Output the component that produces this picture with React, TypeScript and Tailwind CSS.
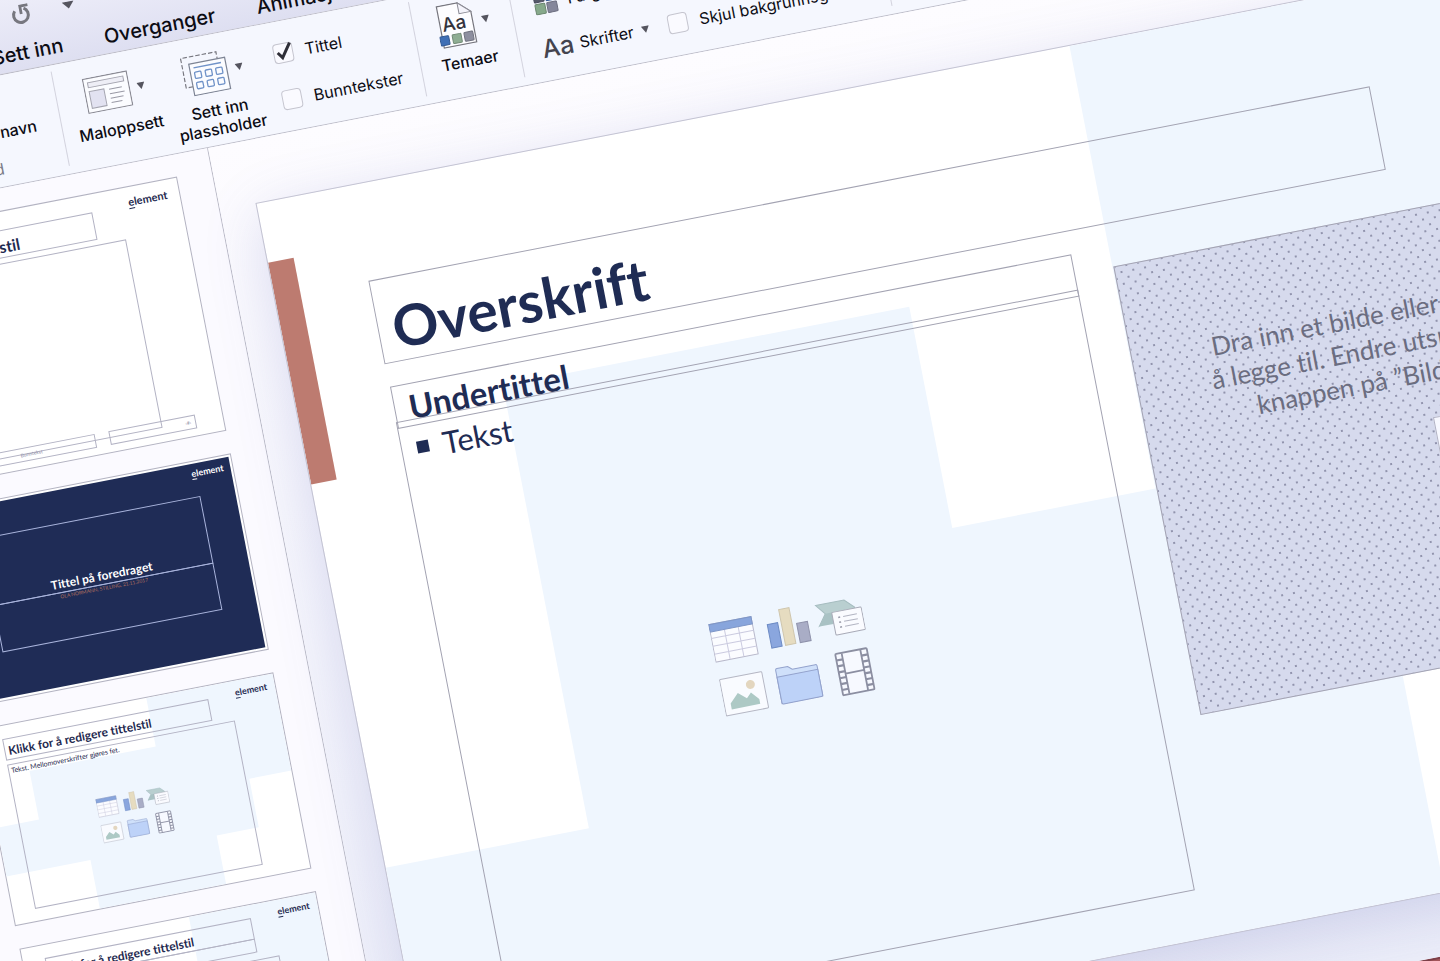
import type { ReactNode } from "react";
import clsx from "clsx";

const UI_FONT = "font-['Inter',sans-serif]";
const SLIDE_FONT = "font-['Lato','Open_Sans',sans-serif] [font-variant-ligatures:none]";

function Caret({ className }: { className?: string }) {
  return (
    <svg viewBox="0 0 8 8" preserveAspectRatio="none" className={clsx("shrink-0", className ?? "size-2")} aria-hidden="true">
      <path d="M0 0.5H8L4 7.5Z" fill="#55555f" />
    </svg>
  );
}

function RedoIcon() {
  return (
    <svg viewBox="0 0 20 20" className="size-5" fill="none" aria-hidden="true">
      <path d="M4.2 5.8A7.4 7.4 0 1 0 13.5 4.4" stroke="#77777f" strokeWidth="3" />
      <path d="M10.2 9.8V1.800H18" stroke="#77777f" strokeWidth="2.800" />
    </svg>
  );
}

function LayoutIcon() {
  return (
    <svg viewBox="0 0 46 36" className="h-9 w-[46px]" fill="none" aria-hidden="true">
      <rect x="0.7" y="0.7" width="44.6" height="34.6" fill="#fbfcff" stroke="#8b8b95" strokeWidth="1.2" />
      <rect x="5" y="5" width="36" height="5" fill="#eeeef6" stroke="#a5a5b0" />
      <rect x="5" y="14" width="15" height="17" fill="#e2e2f1" stroke="#a5a5b0" />
      <path d="M25 15.5H38M25 20H40M25 24.5H38M25 29H36" stroke="#9a9aa6" />
    </svg>
  );
}

function PlaceholderIcon() {
  return (
    <svg viewBox="0 0 46 41" className="h-[41px] w-[46px]" fill="none" aria-hidden="true">
      <path d="M8 31H1V1H37V8" stroke="#77777f" strokeWidth="1.2" strokeDasharray="4.5 2" />
      <rect x="8" y="8" width="36.5" height="32" fill="#fbfcff" stroke="#7d8494" strokeWidth="1.2" />
      <path d="M12 12.5H40" stroke="#6f92c8" strokeWidth="1.4" />
      <g stroke="#6f92c8" strokeWidth="1.3">
        <rect x="12" y="17" width="6.5" height="6.5" rx="1" />
        <rect x="22.8" y="17" width="6.5" height="6.5" rx="1" />
        <rect x="33.5" y="17" width="6.5" height="6.5" rx="1" />
        <rect x="12" y="27.5" width="6.5" height="6.5" rx="1" />
        <rect x="22.8" y="27.5" width="6.5" height="6.5" rx="1" />
        <rect x="33.5" y="27.5" width="6.5" height="6.5" rx="1" />
      </g>
    </svg>
  );
}

function ThemeIcon() {
  return (
    <svg viewBox="0 0 38 44" className="h-11 w-[38px]" fill="none" aria-hidden="true">
      <path d="M3 1H24L36 12V43H3Z" fill="#fdfdff" stroke="#77777f" strokeWidth="1.2" />
      <path d="M24 1V12H36Z" fill="#f4f4fb" stroke="#8b8b95" />
      <text x="5" y="27" fill="#33333d" fontFamily="Inter, sans-serif" fontSize="19">
        Aa
      </text>
      <rect x="0.5" y="31.5" width="9" height="9" rx="1" fill="#3f6fb5" stroke="#345a94" />
      <rect x="13" y="31.5" width="9" height="9" rx="1" fill="#8fae93" stroke="#728a76" />
      <rect x="25" y="31.5" width="9" height="9" rx="1" fill="#8d8f9f" stroke="#70727f" />
    </svg>
  );
}

function ColorsIcon() {
  return (
    <svg viewBox="0 0 24 24" className="size-6" aria-hidden="true">
      <rect x="1" y="1" width="10" height="10" rx="1" fill="#55596a" stroke="#44485a" />
      <rect x="13" y="1" width="10" height="10" rx="1" fill="#3f6fb5" stroke="#345a94" />
      <rect x="1" y="13" width="10" height="10" rx="1" fill="#86a98b" stroke="#6c8770" />
      <rect x="13" y="13" width="10" height="10" rx="1" fill="#85879b" stroke="#6d6f80" />
    </svg>
  );
}

function ContentIcons({ className }: { className: string }) {
  return (
    <svg viewBox="0 0 154 99" className={className} fill="none" aria-hidden="true">
      <g>
        <rect x="0.5" y="2.5" width="43" height="38" fill="#fbfcff" stroke="#b9b9cb" />
        <path d="M0.5 16.5H43.5M0.5 24.5H43.5M0.5 32.5H43.5M15 10V40M29 10V40" stroke="#cbcbe0" />
        <rect x="0.5" y="2.5" width="43" height="7.5" fill="#88a5dc" stroke="#7f97c8" />
      </g>
      <g strokeWidth="1">
        <rect x="58" y="13.5" width="10.500" height="24" fill="#8aa6de" stroke="#6d8bc4" />
        <rect x="72" y="1" width="10.500" height="36.500" fill="#e6dcc0" stroke="#cfc6ae" />
        <rect x="87" y="18" width="11" height="19.500" fill="#a9adc6" stroke="#8f92ab" />
      </g>
      <g>
        <path d="M109 4H138L147 13V21H118L109 25L117 14Z" fill="#b9cfd0" stroke="#a5bcbf" />
        <path d="M109 25.500L117 14H126V25.500Z" fill="#a9c2c4" />
        <rect x="123.500" y="14" width="30" height="23" rx="1" fill="#fafbff" stroke="#a9abb8" />
        <path d="M129 20H131M129 25H131M129 30H131" stroke="#9a9cab" strokeWidth="1.500" />
        <path d="M134 20H148M134 25H148M134 30H148" stroke="#b3b5c3" />
      </g>
      <g>
        <rect x="0.500" y="58.500" width="43" height="37" rx="1" fill="#f9fbff" stroke="#b5b7c4" />
        <circle cx="30" cy="69" r="4.500" fill="#e3d6bf" />
        <path d="M7 90V84L16 75L24 82L29 77L36 85V90Z" fill="#adc9c5" />
      </g>
      <g stroke="#93a2cc">
        <path d="M57.500 94V60Q57.500 58.500 59 58.500H70L74 62H97.500Q99 62 99 63.500V94Z" fill="#cfe0fa" />
        <path d="M57.500 67H99V93Q99 94.500 97.500 94.500H59Q57.500 94.500 57.500 93Z" fill="#bdd2f8" />
      </g>
      <g stroke="#8c8fa2">
        <rect x="119" y="55.500" width="32" height="42" rx="1" fill="#f7f9ff" strokeWidth="1.800" />
        <path d="M125.500 56V97M144.500 56V97M125.500 76.500H144.500" strokeWidth="1.800" />
        <path
          d="M119 62H125.500M119 68H125.500M119 74H125.500M119 80H125.500M119 86H125.500M119 92H125.500M144.500 62H151M144.500 68H151M144.500 74H151M144.500 80H151M144.500 86H151M144.500 92H151"
          strokeWidth="2.200"
        />
      </g>
    </svg>
  );
}

function RibbonButton({ icon, className, children }: { icon: ReactNode; className?: string; children: ReactNode }) {
  return (
    <button
      type="button"
      className={clsx("flex flex-col items-center text-center text-[16px] font-medium leading-[19px]", className)}
    >
      <span className="flex h-11 items-center gap-[7px]">
        {icon}
        <Caret />
      </span>
      <span className="mt-[7px] whitespace-nowrap">{children}</span>
    </button>
  );
}

function RibbonCheck({ label, checked }: { label: string; checked?: boolean }) {
  return (
    <label className="flex h-5 items-center gap-3 whitespace-nowrap text-[16px] leading-5">
      <span className="grid size-5 place-items-center">
        <input
          type="checkbox"
          defaultChecked={checked}
          className="peer col-start-1 row-start-1 size-5 appearance-none rounded-[4px] border border-[#c5c5cf] bg-[#fafaff]"
        />
        <svg
          viewBox="0 0 20 20"
          className="pointer-events-none invisible col-start-1 row-start-1 size-5 overflow-visible peer-checked:visible"
          fill="none"
          aria-hidden="true"
        >
          <path d="M4.500 9L8.500 14.500L18 1" stroke="#2f2f38" strokeWidth="3" />
        </svg>
      </span>
      {label}
    </label>
  );
}

function Divider() {
  return <div className="h-24 w-px shrink-0 bg-[#d3d3de]" />;
}

function Ribbon() {
  return (
    <section aria-label="Lysbildemal" className="flex h-[111px] border-b border-[#bdbdc9] bg-[#f5f7fe] pt-[6px] text-[#0c0c14]">
      <div className="flex w-[236px] shrink-0 flex-col items-end text-[16px] leading-5">
        <span className="mt-10 pr-6 font-medium">navn</span>
        <span className="mt-4 pr-16 text-[#7b7b86]">d</span>
      </div>
      <Divider />
      <RibbonButton icon={<LayoutIcon />} className="ml-[13px] mt-[9px] w-[90px] self-start">
        Maloppsett
      </RibbonButton>
      <RibbonButton icon={<PlaceholderIcon />} className="ml-[10px] mt-[9px] w-[90px] self-start">
        Sett inn
        <br />
        plassholder
      </RibbonButton>
      <div className="ml-[18px] mt-4 flex w-[142px] flex-col gap-[27px]">
        <RibbonCheck label="Tittel" checked />
        <RibbonCheck label="Bunntekster" />
      </div>
      <Divider />
      <RibbonButton icon={<ThemeIcon />} className="ml-5 mt-[9px] w-[58px] self-start">
        Temaer
      </RibbonButton>
      <div className="w-[21px]" />
      <Divider />
      <div className="ml-[22px] mt-[14px] flex w-[128px] flex-col gap-[22px] text-[16px] leading-6">
        <button type="button" className="flex items-center gap-[10px]">
          <ColorsIcon />
          Farger
          <Caret />
        </button>
        <button type="button" className="flex items-center gap-[6px] whitespace-nowrap">
          <span className="text-[25px] font-medium text-[#44444f]">Aa</span>
          <span className="flex items-center gap-2">
            Skrifter
            <Caret />
          </span>
        </button>
      </div>
      <div className="mt-[62px] w-[223px]">
        <RibbonCheck label="Skjul bakgrunnsgrafikk" />
      </div>
      <Divider />
    </section>
  );
}

function Logo({ className }: { className?: string }) {
  return (
    <span className={clsx("absolute font-bold", className)}>
      <span className="underline decoration-from-font underline-offset-2">e</span>lement
    </span>
  );
}

function Thumb({ className, children }: { className?: string; children: ReactNode }) {
  return (
    <li
      className={clsx(
        "relative w-[302px] shrink-0 overflow-hidden border border-[#b3b3c2] bg-white text-[#1f2a50]",
        className ?? "h-[200px]",
      )}
    >
      {children}
    </li>
  );
}

function ThumbPattern() {
  return (
    <svg viewBox="0 0 7 4" preserveAspectRatio="none" className="absolute inset-0 size-full" aria-hidden="true">
      <path d="M4 0H7V2H6V3H5V4H2V3H0V2H1V1H4Z" fill="#eff6fe" />
    </svg>
  );
}

const FRAME = "absolute border border-[#b3b3c4]";

function Sidebar() {
  return (
    <aside
      className={clsx(
        "w-[376px] shrink-0 overflow-hidden border-r border-[#b9b9c6] bg-[#fbfaff] pr-[35px] pt-[22px]",
        SLIDE_FONT,
      )}
    >
      <ol className="flex flex-col items-end gap-[23px]">
        <li className="relative h-[259px] w-[390px] shrink-0 border border-[#b3b3c2] bg-white text-[#1f2a50]">
          <Logo className="right-3 top-[7px] text-[11px] leading-4" />
          <div className="absolute left-7 right-[89px] top-[18px] flex h-7 items-end justify-end border border-[#b3b3c4] pr-[76px]">
            <span className="whitespace-nowrap text-[16px] font-bold leading-5">Klikk for å redigere tittelstil</span>
          </div>
          <div className={clsx(FRAME, "left-7 right-[61px] top-[51px] h-48")} />
          <div className={clsx(FRAME, "left-32 right-[129px] top-[236px] h-[14px] text-center text-[5px] leading-3 text-[#8c8ca5]")}>
            Bunntekst
          </div>
          <div className={clsx(FRAME, "right-[27px] top-[236px] h-[14px] w-[88px] pr-1 text-right text-[5px] leading-3 text-[#8c8ca5]")}>
            ‹#›
          </div>
        </li>

        <Thumb className="h-[200px] p-[2px]">
          <div className="relative size-full bg-[#1f2c56] text-white">
            <Logo className="right-[7px] top-1 text-[9px] leading-3" />
            <div className="absolute left-[37px] right-[35px] top-[33px] flex h-[69px] items-end justify-center border border-[#a9b4dc] text-[12px] font-bold leading-4">
              Tittel på foredraget
            </div>
            <div className="absolute left-[37px] right-[35px] top-[101px] h-12 border border-[#a9b4dc] text-center text-[5px] leading-[7px] text-[#b0705f]">
              OLA NORMANN, STILLING, 21.11.2017
            </div>
          </div>
        </Thumb>

        <Thumb>
          <ThumbPattern />
          <Logo className="right-2 top-[6px] text-[9px] leading-3" />
          <div className={clsx(FRAME, "left-[22px] top-[13px] flex h-[22px] w-[210px] items-end px-[3px] text-[12px] font-bold leading-4")}>
            Klikk for å redigere tittelstil
          </div>
          <div className={clsx(FRAME, "left-[22px] top-[39px] flex h-[147px] w-[232px] flex-col px-[2px] text-[7px] leading-[10px]")}>
            Tekst. Mellomoverskrifter gjøres fet.
          </div>
          <div className="absolute left-[22px] top-[39px] flex h-[147px] w-[232px] items-center justify-center">
            <ContentIcons className="h-[47px] w-[73px]" />
          </div>
        </Thumb>

        <Thumb>
          <ThumbPattern />
          <div className="absolute left-0 top-[13px] h-12 w-[6px] bg-[#bd7b70]" />
          <Logo className="right-2 top-[6px] text-[9px] leading-3" />
          <div className={clsx(FRAME, "left-[22px] top-[13px] flex h-[22px] w-[210px] items-end px-[3px] text-[12px] font-bold leading-4")}>
            Klikk for å redigere tittelstil
          </div>
          <div className={clsx(FRAME, "left-[22px] top-[34px] h-[14px] w-[210px]")} />
          <div className={clsx(FRAME, "left-[22px] top-[55px] h-[131px] w-[148px]")} />
          <div className={clsx(FRAME, "left-[182px] top-[55px] h-[131px] w-[71px]")} />
        </Thumb>
      </ol>
    </aside>
  );
}

const BOX = "absolute border border-[#a3a3b2]";

function Slide() {
  return (
    <article
      className={clsx(
        "relative h-[902px] w-[1365px] overflow-hidden bg-white text-[#1f2c54] shadow-[0_16px_60px_rgba(90,96,180,0.22)] outline outline-[#c3c3d2]",
        SLIDE_FONT,
      )}
    >
      <svg viewBox="0 0 6.594 4" preserveAspectRatio="none" className="absolute inset-0 size-full" aria-hidden="true">
        <path d="M4 0H7V3H5V4H0V3H1V1H3V2H4Z" fill="#eff6fe" />
      </svg>
      <div className="absolute left-0 top-[60px] h-[226px] w-[26px] bg-[#bd7b70]" />
      <h1 className={clsx(BOX, "left-[95px] top-[97px] flex h-[85px] w-[1020px] items-end px-[14px] text-[57px] font-bold leading-[68px]")}>
        Overskrift
      </h1>
      <h2 className={clsx(BOX, "left-[96px] top-[205px] flex h-[43px] w-[694px] items-end px-[14px] text-[33px] font-bold leading-[38px]")}>
        Undertittel
      </h2>
      <div className={clsx(BOX, "left-[95px] top-[241px] flex h-[612px] w-[695px] items-center justify-center pb-[2px] pr-[6px]")}>
        <ContentIcons className="h-[99px] w-[154px]" />
      </div>
      <ul className="absolute left-[95px] top-[252px] px-4 text-[31px] leading-9">
        <li className="flex items-center gap-[14px]">
          <span className="size-3 bg-[#1f2c54]" />
          Tekst
        </li>
      </ul>
      <div className="absolute left-[829px] top-[225px] h-[457px] w-[536px] border border-[#a3a3b2] bg-[#d6daed] bg-[radial-gradient(circle,#82849f_0.6px,transparent_1.2px),radial-gradient(circle,#82849f_0.6px,transparent_1.2px)] bg-[length:12px_12px] bg-[position:0_0,6px_6px]">
        <p className="ml-[74px] mt-[80px] whitespace-nowrap text-[26px] leading-[33px] text-[#6b6d80]">
          <span className="block pl-[6px]">Dra inn et bilde eller</span>
          <span className="block">å legge til. Endre utsnitt</span>
          <span className="block pl-10">knappen på ”Bilde</span>
        </p>
        <button
          type="button"
          aria-label="Sett inn bilde"
          className="ml-[284px] mt-[29px] block h-[38px] w-11 border border-[#b1b2c4] bg-[#f7f8ff]"
        />
      </div>
    </article>
  );
}

export default function App() {
  return (
    <main className={clsx("h-screen overflow-hidden bg-[#fbfaff]", UI_FONT)}>
      <div className="-ml-[200px] w-[calc(100%+240px)] origin-[200px_0px] -rotate-11">
        <header className="h-[74px] border-b border-[#bdbdc9] bg-linear-to-b from-[#ededf9] to-[#dedff1]">
          <div className="flex h-8 items-center gap-8 pl-[208px] pt-1">
            <button type="button" aria-label="Gjør om">
              <RedoIcon />
            </button>
            <button type="button" aria-label="Tilpass verktøylinjen">
              <Caret className="h-2 w-3" />
            </button>
          </div>
          <nav className="flex gap-[42px] pl-[181px] pt-3 text-[20px] font-medium leading-6 text-[#0c0c14]">
            <a href="#sett-inn">Sett inn</a>
            <a href="#overganger">Overganger</a>
            <a href="#animasjoner">Animasjoner</a>
          </nav>
        </header>
        <Ribbon />
        <div className="flex h-[1029px]">
          <Sidebar />
          <section aria-label="Lysbilde" className="flex-1 bg-linear-to-b from-[#fdfcff] to-[#eceef9] pl-[37px] pt-16">
            <Slide />
          </section>
        </div>
        <footer className="h-10 border-t-2 border-[#7d4048] bg-[#a5565a]" />
      </div>
    </main>
  );
}
